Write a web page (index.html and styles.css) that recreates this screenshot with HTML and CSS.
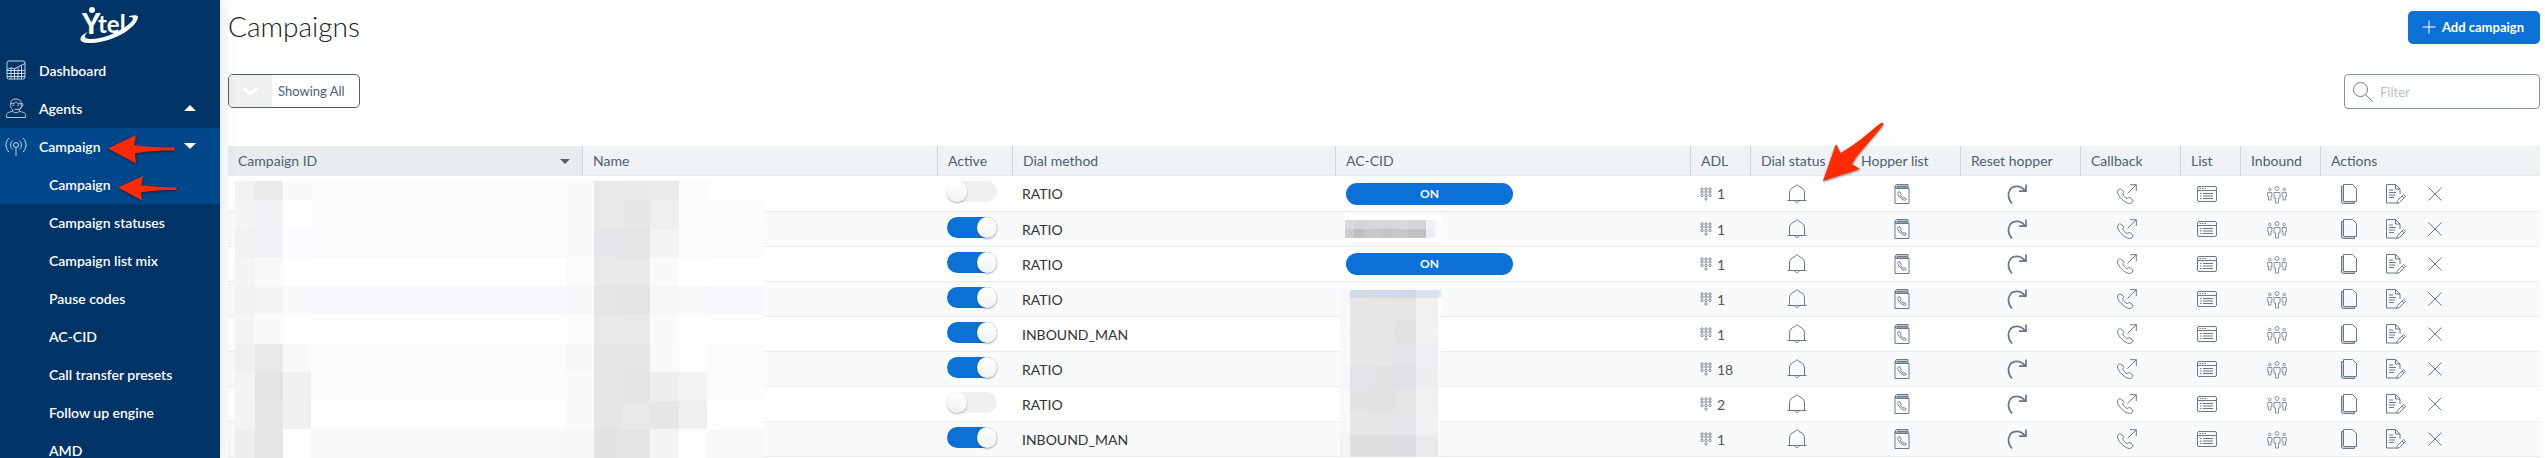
FILE: index.html
```html
<!DOCTYPE html>
<html lang="en">
  <head>
    <meta charset="UTF-8" />
    <meta name="viewport" content="width=device-width, initial-scale=1.0" />
    <title>Campaigns</title>
    <link rel="stylesheet" href="styles.css">
  </head>
  <body>
    <!-- icon sprite -->
    <svg class="sprite" width="0" height="0" aria-hidden="true">
      <symbol id="i-dashboard" viewBox="0 0 20 20">
        <rect x="1" y="1" width="18" height="18" rx="2" />
        <path d="M1 10l4-2.5 3 1.5 4-2 3-1.5 4-2M1 10.5h18M1 13.5h18M1 16.5h18M5 8v11M8.5 9v10M12 7.5V19M15.5 6v13" />
      </symbol>
      <symbol id="i-agent" viewBox="0 0 22 22">
        <path d="M.5 21.5v-3c0-2 3-3 7-4v-1.500C5.500 12 5 9.500 5 7c0-4 2.500-6 6-6s6 2 6 6c0 2.500-.5 5-2.500 6v1.500c4 1 7 2 7 4v3z" />
        <path d="M5 6.500c4 0 5-1 6-2.500 1 1.500 2 2.500 6 2.500M17.500 5.500c1.500 0 1.500 4 0 4M17 10c-1 2-3 2.500-5 2.500M7.500 8h2M12.500 8h2M9.500 12.500h3M7.500 15c2 1.500 5 1.500 7 0" />
      </symbol>
      <symbol id="i-antenna" viewBox="0 0 22 20">
        <circle cx="11" cy="9" r="2.500" />
        <path d="M11 11.500V20M7.500 4.500c-2.500 2.500-2.500 6.500 0 9M14.500 4.500c2.500 2.500 2.500 6.500 0 9M4 2C0 6 0 12 4 16M18 2c4 4 4 10 0 14" />
      </symbol>
      <symbol id="i-keypad" viewBox="0 0 12 14">
        <circle cx="2" cy="2" r="1.200" /><circle cx="6" cy="2" r="1.200" /><circle cx="10" cy="2" r="1.200" />
        <circle cx="2" cy="5" r="1.200" /><circle cx="6" cy="5" r="1.200" /><circle cx="10" cy="5" r="1.200" />
        <circle cx="2" cy="8.500" r="1.200" /><circle cx="6" cy="8.500" r="1.200" /><circle cx="10" cy="8.500" r="1.200" />
        <circle cx="6" cy="12" r="1.200" />
      </symbol>
      <symbol id="i-bell" viewBox="0 0 20 20">
        <path d="M.5 16.500h19M2.500 16.500V9c0-3.500 2.500-5.500 5.500-6.500.5-2 3.500-2 4 0 3 1 5.500 3 5.500 6.500v7.500M8 16.500c0 2.700 4 2.700 4 0" />
      </symbol>
      <symbol id="i-hopper" viewBox="0 0 20 20">
        <path class="tint" d="M3.500 3.500V2c0-1 .5-1.500 1.500-1.500h11v3.500H4z" />
        <path d="M3 2.500v17h14V4.500H4.500C3.500 4.500 3 4 3 3M5 2.500h10" />
        <path d="M6.500 8c-1 .5-1 1.500-.5 2.500 1.500 3 3.500 5 6.500 5.800 1 .2 1.700-.5 1.700-1.300l-2.200-1.500-1 .7c-1-.6-2-1.700-2.500-2.700l.7-1L7.700 7.700z" />
      </symbol>
      <symbol id="i-reset" viewBox="0 0 20 20">
        <path class="thick" d="M5 19.500C-1 13 1 2.500 9.500 2.300c3.500-.1 6.500 1.700 8.700 4.700M19 .5v6.700h-7" />
      </symbol>
      <symbol id="i-callback" viewBox="0 0 20 20">
        <path d="M3.500 5C2 4.300.5 6 .5 8c.3 4 7.500 11.500 12 11.500 2 0 4-2.200 3.300-3.500l-2.800-2.300c-1.200-.7-2 .8-3 .8-1.500-.5-4-3.300-4.300-4.500 0-1 1.600-1.400 1-2.700z" />
        <path d="M10.500 9.500 19.300.7M13 .7h6.300V7" />
      </symbol>
      <symbol id="i-list" viewBox="0 0 20 20">
        <rect x=".5" y="2.500" width="19" height="15" rx="1.500" />
        <path d="M.5 6.500h19M2.500 4.500H4M5 4.500h1.500M7.500 4.500H9M3 9.500h1.500M6 9.500h10M3 12h1.500M6 12h10M3 14.500h1.500M6 14.500h10" />
      </symbol>
      <symbol id="i-inbound" viewBox="0 0 20 20">
        <circle cx="10" cy="4.500" r="2" /><circle cx="2.800" cy="5.500" r="1.300" /><circle cx="17.200" cy="5.500" r="1.300" />
        <path d="M7 8.500h6v5.500h-1.500v5h-3v-5H7zM.7 8.500h4.200v4H4v3.500H1.500V12.500H.7zM15.100 8.500h4.200v4h-.8v3.500H16V12.500h-.9z" />
      </symbol>
      <symbol id="i-copy" viewBox="0 0 20 20">
        <path class="tint" d="M4.500 2.500h-2V17c0 1.500.5 2.500 2 2.500h11v-2H6c-1 0-1.500-.5-1.500-1.500z" />
        <path d="M4.500.5h9l4 4v13H6c-1 0-1.500-.5-1.500-1.500z" />
      </symbol>
      <symbol id="i-edit" viewBox="0 0 20 20">
        <path d="M14 10V5L9.500.5h-9v18.500h9.500M9.500.5V5H14M3 6h4M3 8.500h7M3 11h6M3 13.500h5" />
        <path d="M10.500 19.500l1-3 6.200-6 1.800 1.800-6 6.200zM16 12l1.800 1.800" />
      </symbol>
      <symbol id="i-close" viewBox="0 0 20 20">
        <path d="M3.500 3.500l13 13M16.500 3.500l-13 13" />
      </symbol>
    </svg>

    <nav class="sidebar">
      <svg class="logo" width="60" height="38" viewBox="0 0 60 38" role="img">
        <circle cx="13" cy="3" r="3" />
        <text class="logo-y" x="3" y="27">Y</text>
        <text class="logo-tel" x="19" y="26">tel</text>
        <path d="M50 9c5-1 9-1 9 1C58 20 36 35 12 36 3 36 0 34 2 30c1-2 4-4 7-5-3 2-4 5-2 6 3 2 14 1 24-3 12-5 22-12 23-16 0-2-2-2-4-2z" />
      </svg>

      <ul class="menu">
        <li>
          <a href="#" class="item"><svg class="icon nav-icon"><use href="#i-dashboard" /></svg>Dashboard</a>
        </li>
        <li>
          <a href="#" class="item"><svg class="icon nav-icon"><use href="#i-agent" /></svg>Agents<span class="caret up"></span></a>
        </li>
        <li class="active">
          <a href="#" class="item"><svg class="icon nav-icon"><use href="#i-antenna" /></svg>Campaign<span class="caret"></span></a>
          <svg class="arrow arrow-parent" width="70" height="32" viewBox="0 0 70 32">
            <path d="M1 15.500 29 2l-2 10c12 2 26 2.500 40 2.500q2 1.500 0 3c-14 0-27 .5-39 3l1 10z" />
          </svg>
        </li>
        <li class="active">
          <a href="#" class="item sub">Campaign</a>
          <svg class="arrow arrow-child" width="62" height="28" viewBox="0 0 62 28">
            <path d="M1 13.500 26 2l-2 9c11 1.500 23 2.500 35 2.500q2 1 0 2.500c-12 0-24 .5-35 2.500l1 8z" />
          </svg>
        </li>
        <li><a href="#" class="item sub">Campaign statuses</a></li>
        <li><a href="#" class="item sub">Campaign list mix</a></li>
        <li><a href="#" class="item sub">Pause codes</a></li>
        <li><a href="#" class="item sub">AC-CID</a></li>
        <li><a href="#" class="item sub">Call transfer presets</a></li>
        <li><a href="#" class="item sub">Follow up engine</a></li>
        <li><a href="#" class="item sub">AMD</a></li>
      </ul>
    </nav>

    <main class="content">
      <header class="page-header">
        <h1>Campaigns</h1>
        <button type="button" class="btn-add">
          <svg width="14" height="14" viewBox="0 0 14 14"><path d="M7 .5v13M.5 7h13" /></svg>
          Add campaign
        </button>
      </header>

      <div class="toolbar">
        <div class="showing">
          <svg class="showing-icon" viewBox="0 0 44 32"><path d="M15 13l7 6 7-6" /></svg>
          <select aria-label="Showing">
            <option>Showing All</option>
          </select>
        </div>
        <label class="filter">
          <svg width="20" height="20" viewBox="0 0 20 20"><circle cx="7.500" cy="7.500" r="7" /><path d="M12.500 12.500l7 7" /></svg>
          <input type="text" placeholder="Filter" aria-label="Filter" />
        </label>
      </div>

      <table class="grid">
        <colgroup>
          <col />
          <col />
          <col class="w-active" />
          <col class="w-method" />
          <col />
          <col class="w-60" />
          <col class="w-100" />
          <col class="w-110" />
          <col class="w-120" />
          <col class="w-100" />
          <col class="w-60" />
          <col class="w-80" />
          <col class="w-actions" />
        </colgroup>
        <thead>
          <tr>
            <th class="sorted">Campaign ID</th>
            <th>Name</th>
            <th>Active</th>
            <th>Dial method</th>
            <th>AC-CID</th>
            <th>ADL</th>
            <th class="marked">Dial status
              <svg class="arrow arrow-status" width="66" height="64" viewBox="0 0 66 64">
                <path d="M2 61 15 24l4.500 9C33 26 47 13 60 3q3-1 2 2C53 18 39 30 31 44l8 5z" />
              </svg>
            </th>
            <th>Hopper list</th>
            <th>Reset hopper</th>
            <th>Callback</th>
            <th>List</th>
            <th>Inbound</th>
            <th>Actions</th>
          </tr>
        </thead>
        <tbody id="rows"></tbody>
      </table>
    </main>

    <script src="app.js"></script>
  </body>
</html>
```

FILE: styles.css
```css
* {
  box-sizing: border-box;
}
body {
  margin: 0;
  height: 100vh;
  display: flex;
  overflow: hidden;
  font-family: Lato, "Liberation Sans", sans-serif;
  font-size: 14px;
  color: #333;
  background-color: #fff;
}
.sprite {
  position: absolute;
}
.icon {
  width: 20px;
  height: 20px;
  display: block;
  fill: none;
  stroke: #6a7987;
  stroke-width: 1;
}
.tint {
  fill: #c5ccd2;
}
.thick {
  stroke-width: 1.7;
}
#i-inbound,
#i-keypad {
  stroke-width: 0.8;
}

/* sidebar */
.sidebar {
  width: 220px;
  flex-shrink: 0;
  background-color: #003366;
  box-shadow: 0 0 16px rgba(0, 0, 0, 0.15);
  z-index: 1;
}
.logo {
  display: block;
  margin: 7px auto 7px 79px;
  fill: #fff;
  overflow: visible;
}
.logo-y {
  font-size: 28px;
  font-weight: 900;
}
.logo-tel {
  font-size: 24px;
  font-weight: 700;
}
.menu {
  list-style: none;
  margin: 0;
  padding: 0;
}
.menu li {
  position: relative;
}
.menu .active {
  background-color: #00468b;
}
.item {
  display: flex;
  align-items: center;
  height: 38px;
  padding: 0 24px 2px 5px;
  color: #fff;
  font-weight: 600;
  text-decoration: none;
}
.item.sub {
  padding-left: 49px;
}
.nav-icon {
  width: 22px;
  margin-right: 12px;
  stroke: #dfe8f0;
  stroke-width: 0.9;
}
.caret {
  margin-left: auto;
  border: 6px solid transparent;
  border-bottom: 0;
  border-top-color: #fff;
}
.caret.up {
  border-top: 0;
  border-bottom: 6px solid #fff;
}
.arrow {
  position: absolute;
  fill: #ff2a00;
  filter: drop-shadow(0 1px 1px rgba(0, 0, 0, 0.5));
}
.arrow-parent {
  left: 107px;
  top: 5px;
}
.arrow-child {
  left: 117px;
  top: 8px;
}
.arrow-status {
  left: 70px;
  top: -26px;
  z-index: 2;
}

/* page */
.content {
  flex: 1;
  min-width: 0;
  padding: 0 5px 0 8px;
}
.page-header {
  display: flex;
  justify-content: space-between;
  align-items: center;
  height: 54px;
}
h1 {
  margin: 0;
  padding-bottom: 3px;
  color: #222;
  font-size: 28px;
  font-weight: 300;
}
.btn-add {
  display: flex;
  align-items: center;
  gap: 6px;
  height: 33px;
  padding: 0 16px 0 14px;
  border: none;
  border-radius: 5px;
  background-color: #0c71d6;
  color: #fff;
  font-family: inherit;
  font-size: 13px;
  font-weight: 700;
}
.btn-add svg {
  stroke: #fff;
}
.toolbar {
  display: flex;
  justify-content: space-between;
  padding: 20px 0 37px;
}
.showing {
  display: flex;
  width: 132px;
  height: 34px;
  border: 1px solid #4d5f70;
  border-radius: 5px;
  overflow: hidden;
}
.showing-icon {
  width: 43px;
  flex-shrink: 0;
  background-color: #f0f0f0;
  fill: none;
  stroke: #fff;
  stroke-width: 3;
}
.showing select {
  appearance: none;
  flex: 1;
  min-width: 0;
  padding: 0 0 0 6px;
  border: none;
  background: none;
  color: #4d5f70;
  font-family: inherit;
  font-size: 13px;
}
.filter {
  display: flex;
  align-items: center;
  width: 196px;
  height: 35px;
  padding: 0 8px;
  border: 1px solid #8795a3;
  border-radius: 4px;
}
.filter svg {
  flex-shrink: 0;
  fill: none;
  stroke: #6a7987;
}
.filter input {
  flex: 1;
  min-width: 0;
  padding: 0 0 0 7px;
  border: none;
  outline: none;
  background: none;
  font-family: inherit;
  font-size: 13px;
}
.filter input::placeholder {
  color: #b9c1c8;
}

/* table */
.grid {
  width: 100%;
  table-layout: fixed;
  border-collapse: separate;
  border-spacing: 0;
}
.w-active {
  width: 75px;
}
.w-method {
  width: 323px;
}
.w-60 {
  width: 60px;
}
.w-80 {
  width: 80px;
}
.w-100 {
  width: 100px;
}
.w-110 {
  width: 110px;
}
.w-120 {
  width: 120px;
}
.w-actions {
  width: 219px;
}
th {
  position: relative;
  height: 30px;
  padding: 0 10px;
  background-color: #eff3f6;
  border-right: 1px solid #cfd6db;
  border-bottom: 1px solid #e5e9ec;
  color: #4d5f70;
  font-weight: 400;
  text-align: left;
  white-space: nowrap;
}
th:last-child {
  border-right: none;
}
.sorted {
  background-color: #e8ecef;
}
.sorted::after {
  content: "";
  position: absolute;
  right: 12px;
  top: 13px;
  border: 5px solid transparent;
  border-bottom: 0;
  border-top-color: #4d5f70;
}
.marked {
  z-index: 2;
}
td {
  position: relative;
  height: 35px;
  padding: 0 9px;
  border-bottom: 1px solid #e8ecef;
}
tr:first-child td {
  height: 36px;
}
tr:nth-child(even) td {
  background-color: #f8fafc;
}
td.center {
  padding: 0 9px 0 0;
}
.btn-icon {
  display: block;
  margin: 0 auto;
  padding: 0;
  border: none;
  background: none;
}
.switch {
  appearance: none;
  display: block;
  width: 50px;
  height: 21px;
  margin: 0 0 4px;
  border-radius: 11px;
  background-color: #f0f0f0;
}
.switch::before {
  content: "";
  display: block;
  width: 20px;
  height: 21px;
  border-radius: 50%;
  background-image: linear-gradient(#fff, #f2f2f2);
  box-shadow: 0 1px 2px rgba(0, 0, 0, 0.35);
}
.switch:checked {
  background-color: #0c71d6;
}
.switch:checked::before {
  margin-left: 30px;
}
.pill {
  width: 167px;
  height: 22px;
  margin-left: 1px;
  border-radius: 11px;
  background-color: #0c71d6;
  color: #fff;
  font-size: 12px;
  font-weight: 700;
  line-height: 22px;
  text-align: center;
}
.adl {
  display: flex;
  align-items: center;
  gap: 5px;
  color: #555;
}
.adl .icon {
  width: 12px;
  height: 14px;
}
.actions {
  display: flex;
  padding-left: 9px;
}
.actions .btn-icon {
  margin: 0 27px 0 0;
}
.actions .btn-icon:nth-child(2) {
  margin-right: 19px;
}
.mosaic {
  position: absolute;
  z-index: 1;
}
.mosaic-names {
  left: 7px;
  top: 5px;
}
.mosaic-cid {
  left: 9px;
  top: 3px;
}
.mosaic-cids {
  left: 4px;
  top: 8px;
}
```

FILE: app.js
```js
const campaigns = [
  { active: false, method: "RATIO", cid: "ON", adl: 1 },
  { active: true, method: "RATIO", cid: "", adl: 1 },
  { active: true, method: "RATIO", cid: "ON", adl: 1 },
  { active: true, method: "RATIO", cid: "", adl: 1 },
  { active: true, method: "INBOUND_MAN", cid: "", adl: 1 },
  { active: true, method: "RATIO", cid: "", adl: 18 },
  { active: false, method: "RATIO", cid: "", adl: 2 },
  { active: true, method: "INBOUND_MAN", cid: "", adl: 1 },
];

// Pixelated covers for private data: column edges, row edges, colors per row
const names = {
  cls: "mosaic-names",
  x: [0, 20, 48, 76, 331, 359, 387, 415, 444, 472, 529],
  y: [0, 19, 48, 77, 105, 134, 163, 191, 220, 248, 277],
  fill: [
    "f3f1ef ebebed f9fbfa fbfbfb f9fbfa e7e9e7 e8e9eb ebeaea fafbfa fdfefe",
    "f4f4f2 f0f1f4 ffffff fbfcfe fafafc e9e8e8 e8e7e6 eeeff1 fbfcfe fbfcfe",
    "f1f1f1 f0f1f4 fafcff fafbfd f8f9fb e5e6e9 e4e5e7 f4f4f4 fcfcfe fbfbfd",
    "f6f4f2 f8faf9 ffffff fefffe fbfbfb e9e8e8 e8eae8 fbfafa ffffff fefffe",
    "f2f2f2 f3f4f6 f8fafc f7f8fb f6f7f9 e4e5e7 e3e4e6 f5f6f8 f8f9fb f7f8fb",
    "f6f4f2 f8fbf9 ffffff fefefe fcfcfc e7e9e7 e8eae8 f9fbf9 ffffff fefefe",
    "f0f0f0 e8e9eb f7f8fa fafbfd f6f7f9 e4e5e7 e4e5e7 f8fafc fcfdff fafbfd",
    "f3f3f3 e1e4e2 f1f0f0 fafbfd f9f9f9 e5e7e5 e3e4e6 edeef0 f3f3f3 fafbfd",
    "f5f3f1 e4e7e5 f0f0f0 fefffe f9fbf9 e7e6e6 e8eae8 e7e6e6 eef0ee ffffff",
    "eeeeee e4e5e7 fcfdff f7f8fa f5f6f8 e3e2e3 e3e4e6 f4f5f7 fcfdff f7f8fa",
  ],
};
const cid = {
  cls: "mosaic-cid",
  x: [0, 9, 18, 27, 36, 45, 54, 63, 81, 90, 97],
  y: [0, 5, 14, 23, 27],
  fill: [
    "fff fff fff fff fff fff fff fff fff fff",
    "dadbdd d4d5d8 d5d6d9 d5d6d9 d5d6d9 d5d6d9 d9dade d3d5d8 f0f1f4 f8fbff",
    "cbcccd bdc0c2 c5c6ca c7c8cc c1c5c8 c6c7cb c8c9cd c0c1c4 ebeff3 f8fbff",
    "fff fff fff fff fff fff fff fff fff fff",
  ],
};
const cids = {
  cls: "mosaic-cids",
  x: [0, 10, 32, 54, 76, 98, 101],
  y: [0, 8, 31, 53, 76, 99, 122, 145, 167],
  fill: [
    "f4f7fb d1dce8 cfdce8 ccd9e7 d7e3ef dcebfa",
    "f7f7f7 e8e6e4 e8e7e5 e6e5e3 f3f1ef ffffff",
    "f8f8f8 e4e7e5 e7e6e6 e2e2e2 f0f3f1 ffffff",
    "f6f8fa e5e7e9 e6e6e6 e3e4e7 eeeff2 fafbfd",
    "f4f6f8 e2e3e6 e1e2e4 e0e1e4 edeef0 f9fafc",
    "f9f9f9 e2e2e2 e2e2e3 e5e5e5 f1f1f1 ffffff",
    "f7f7f7 e5e7e9 e6e6e6 e3e5e8 f1f1f1 fafbfd",
    "f3f4f6 dedee0 dfdfe1 dcdde0 eaeaec f9fafc",
  ],
};

function mosaic({ cls, x, y, fill }) {
  const rects = fill.map((row, r) =>
    row.split(" ").map((color, c) =>
      `<rect x="${x[c]}" y="${y[r]}" width="${x[c + 1] - x[c]}" height="${y[r + 1] - y[r]}" fill="#${color}"/>`
    ).join("")
  ).join("");
  return `<svg class="mosaic ${cls}" width="${x[x.length - 1]}" height="${y[y.length - 1]}" shape-rendering="crispEdges" aria-hidden="true">${rects}</svg>`;
}

function icon(name) {
  return `<svg class="icon"><use href="#i-${name}"/></svg>`;
}

function iconButton(name, label) {
  return `<button type="button" class="btn-icon" aria-label="${label}">${icon(name)}</button>`;
}

document.getElementById("rows").innerHTML = campaigns.map((c, i) => `
  <tr>
    <td>${i === 0 ? mosaic(names) : ""}</td>
    <td></td>
    <td><input type="checkbox" class="switch" aria-label="Active" ${c.active ? "checked" : ""}></td>
    <td>${c.method}</td>
    <td>${c.cid ? `<div class="pill">${c.cid}</div>` : ""}${i === 1 ? mosaic(cid) : ""}${i === 3 ? mosaic(cids) : ""}</td>
    <td><div class="adl">${icon("keypad")}${c.adl}</div></td>
    <td class="center">${iconButton("bell", "Dial status")}</td>
    <td class="center">${iconButton("hopper", "Hopper list")}</td>
    <td class="center">${iconButton("reset", "Reset hopper")}</td>
    <td class="center">${iconButton("callback", "Callback")}</td>
    <td class="center">${iconButton("list", "List")}</td>
    <td class="center">${iconButton("inbound", "Inbound")}</td>
    <td><div class="actions">${iconButton("copy", "Copy")}${iconButton("edit", "Edit")}${iconButton("close", "Delete")}</div></td>
  </tr>`).join("");
```
